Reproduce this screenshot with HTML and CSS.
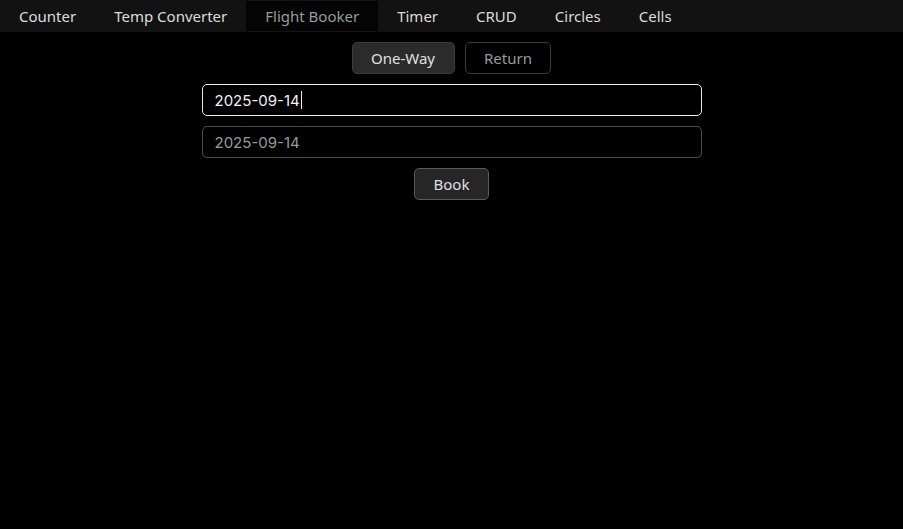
FILE: index.html
```html
<!DOCTYPE html>
<html>
<head>
<meta charset="utf-8">
<link rel="stylesheet" href="styles.css">
</head>
<body>
<nav class="tabs">
  <span class="tab">Counter</span>
  <span class="tab">Temp Converter</span>
  <span class="tab active">Flight Booker</span>
  <span class="tab">Timer</span>
  <span class="tab">CRUD</span>
  <span class="tab">Circles</span>
  <span class="tab">Cells</span>
</nav>
<main class="booker">
  <div class="modes">
    <button class="btn selected">One-Way</button>
    <button class="btn outline">Return</button>
  </div>
  <div class="field focused">2025-09-14<span class="caret"></span></div>
  <div class="field disabled">2025-09-14</div>
  <button class="btn book">Book</button>
</main>
</body>
</html>
```
FILE: styles.css
```css
html, body {
  margin: 0;
  padding: 0;
  background: #000;
  height: 100%;
  font-family: "Noto Sans", "Open Sans", sans-serif;
}
.tabs {
  display: flex;
  height: 32px;
  background: #121212;
  padding-left: 0;
}
.tab {
  display: flex;
  align-items: center;
  padding: 0 19px;
  font-size: 15px;
  color: #dcdcdc;
  height: 32px;
  box-sizing: border-box;
}
.tab.active {
  background: #040404;
  color: #9a9a9a;
  margin-top: 1px;
  height: 30px;
  padding-bottom: 1px;
}
.booker {
  display: flex;
  flex-direction: column;
  align-items: center;
  padding-top: 10px;
  gap: 10px;
}
.modes {
  display: flex;
  gap: 10px;
}
.btn {
  font-family: "Noto Sans", "Open Sans", sans-serif;
  font-size: 15px;
  height: 32px;
  border-radius: 5px;
  box-sizing: border-box;
  padding: 0 18.5px;
  line-height: 30px;
}
.btn.selected {
  background: #2b2b2b;
  border: 1px solid #3c3c3c;
  color: #e0e0e0;
}
.btn.outline {
  background: #000;
  border: 1px solid #3a3a3a;
  color: #9a9a9a;
}
.btn.book {
  background: #262626;
  border: 1px solid #5a5a5a;
  color: #e0e0e0;
}
.field {
  width: 500px;
  height: 32px;
  box-sizing: border-box;
  border-radius: 5px;
  padding: 0 12px;
  display: flex;
  align-items: center;
  font-family: "Inter", "Noto Sans", sans-serif;
  font-size: 15px;
}
.field.focused {
  border: 1px solid #e8e8e8;
  color: #f0f0f0;
}
.field.disabled {
  border: 1px solid #4a4a4a;
  color: #9a9a9a;
}
.caret {
  display: inline-block;
  width: 1px;
  height: 18px;
  background: #f0f0f0;
  margin-left: 1px;
}
```
